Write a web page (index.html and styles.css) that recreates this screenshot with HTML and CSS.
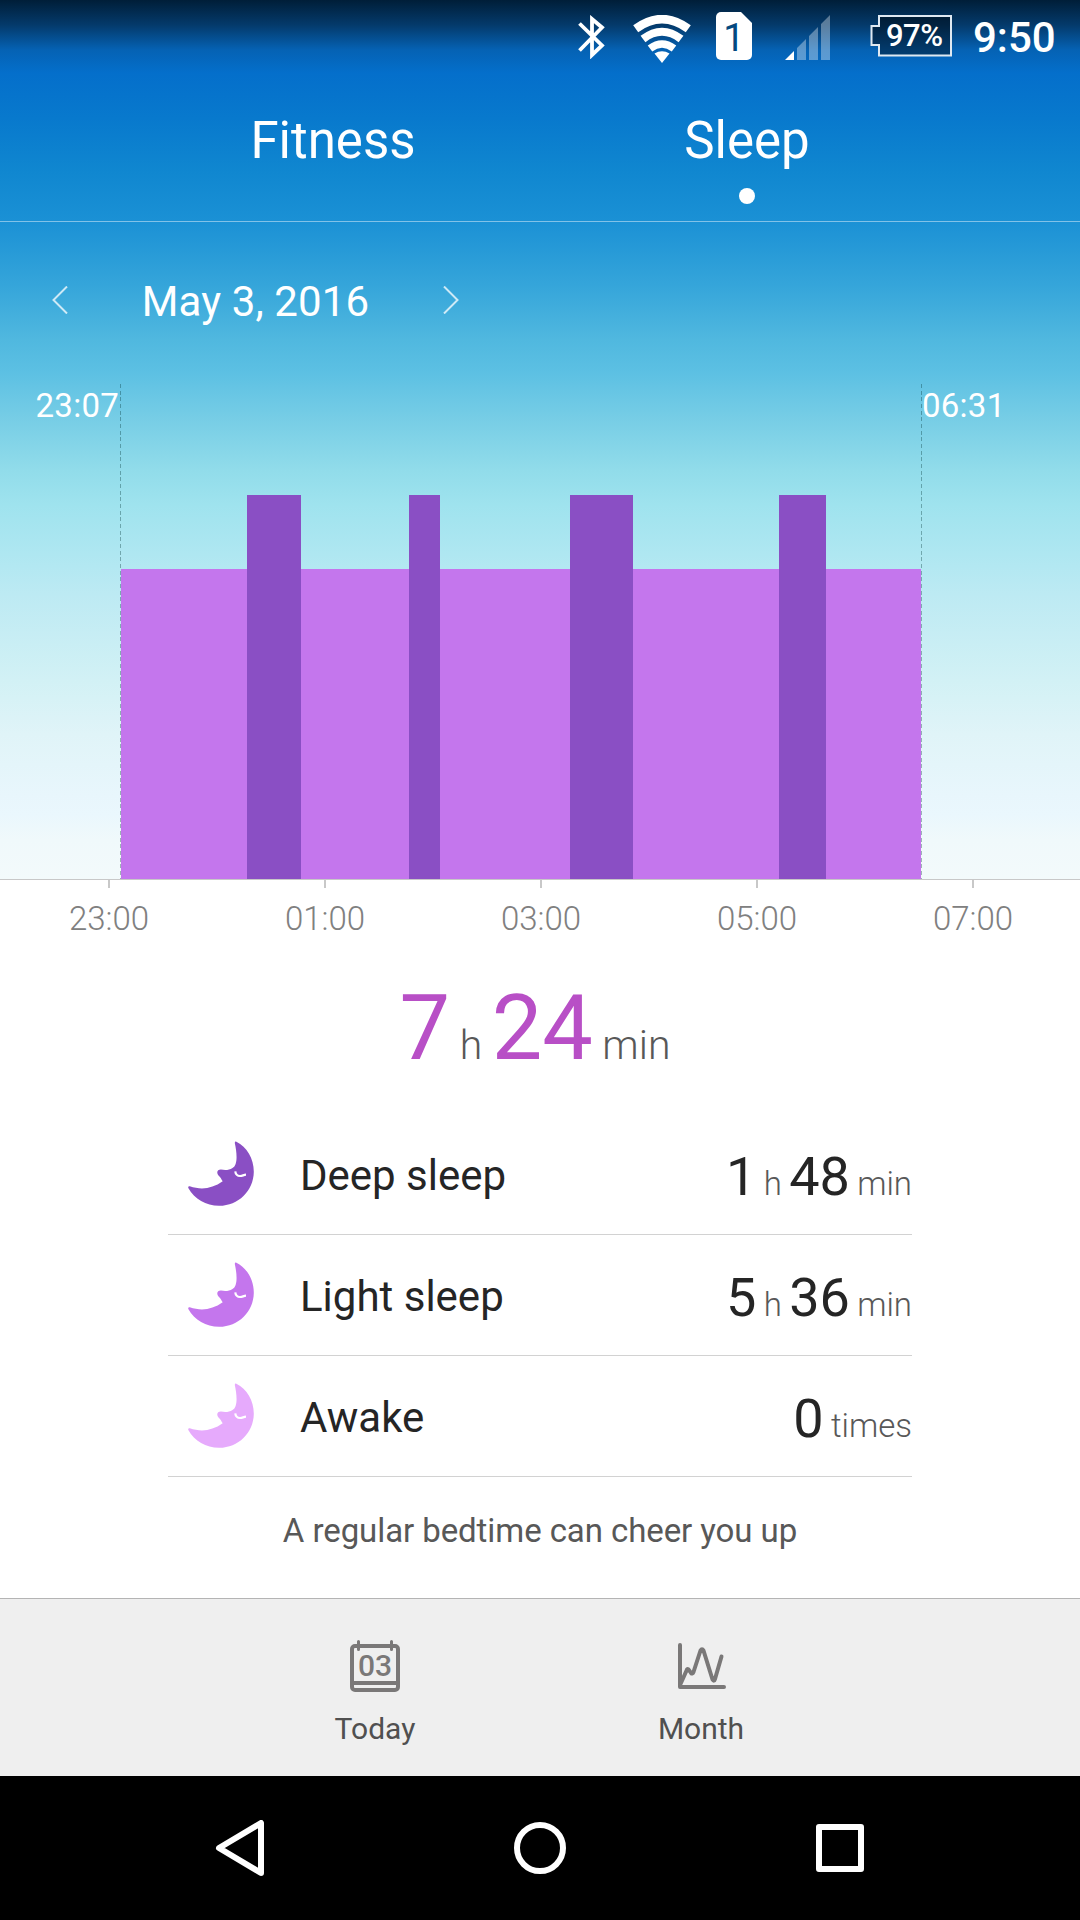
FILE: index.html
```html
<!DOCTYPE html>
<html lang="en">
<head>
    <meta charset="UTF-8">
    <title>Sleep</title>
    <link rel="stylesheet" href="styles.css">
</head>
<body>
    <svg class="symbols">
        <symbol id="moon" viewBox="0 0 66 66">
            <path fill="currentColor" d="M48.4 0.7C59 6 66 18 65.8 31C65.5 50 50 65 31 64.8C18 64.6 6.500 58 0.300 47Q-0.200 45 1.800 45.300C13 49 24 48 34.700 40.300C33 38 33 36.500 30.500 34.500C28 31.500 29.500 28.500 33 28.600C37 29.300 41 29.300 44.500 27C50 24 49 12 46.800 2Q46.800 0.200 48.400 0.700Z"/>
            <path fill="none" stroke="#fff" stroke-width="2.200" d="M47.300 30.300C47.500 33 49.500 35 52 35C54.500 35 55.500 33.800 58 33.700"/>
        </symbol>
    </svg>

    <div class="hero">
        <div class="status-bar">
            <svg class="bluetooth" width="27" height="44" viewBox="0 0 27 44" fill="none" stroke="#fff" stroke-width="3.800">
                <path d="M1.500 8.500L24 30.500L14 40V4L24 12.500L1.500 35.500"/>
            </svg>
            <svg class="wifi" width="58" height="48" viewBox="0 0 58 48" fill="none" stroke="#fff">
                <path fill="#fff" stroke="none" d="M29 48L21.500 38.500Q29 34 36.500 38.500Z"/>
                <path stroke-width="7.500" d="M17 33.500Q29 24.500 41 33.500"/>
                <path stroke-width="8" d="M10 24Q29 9.500 48 24"/>
                <path stroke-width="8.500" d="M2.700 13.700Q29 -5.500 55.300 13.700"/>
            </svg>
            <div class="sim">1</div>
            <svg class="signal" width="45" height="45" viewBox="0 0 45 45" fill="#fff">
                <path d="M0 45L9 36V45Z"/>
                <path opacity=".35" d="M12 45V33L21 24V45ZM24 45V21L33 12V45ZM36 45V9L45 0V45Z"/>
            </svg>
            <div class="battery">
                <svg width="82" height="42" viewBox="0 0 82 42">
                    <path fill="#000" fill-opacity=".4" stroke="#dfe9f2" stroke-width="2" d="M9 1H81V40.500H9V30H1.500V11H9Z"/>
                </svg>
                <span class="battery-text">97%</span>
            </div>
            <span class="clock">9:50</span>
        </div>

        <div class="tabs">
            <div class="tab">Fitness</div>
            <div class="tab active">Sleep</div>
        </div>

        <div class="date-row">
            <svg width="16" height="28" viewBox="0 0 16 28" fill="none" stroke="#fff" stroke-opacity=".75" stroke-width="2"><path d="M15 0.500L1.500 14L15 27.500"/></svg>
            <span class="date">May 3, 2016</span>
            <svg width="16" height="28" viewBox="0 0 16 28" fill="none" stroke="#fff" stroke-opacity=".75" stroke-width="2"><path d="M1 0.500L14.500 14L1 27.500"/></svg>
        </div>

        <div class="chart">
            <span class="start">23:07</span>
            <div class="marker"></div>
            <div class="bars">
                <div class="light" style="width: 126px"></div>
                <div class="deep" style="width: 54px"></div>
                <div class="light" style="width: 108px"></div>
                <div class="deep" style="width: 31px"></div>
                <div class="light" style="width: 130px"></div>
                <div class="deep" style="width: 63px"></div>
                <div class="light" style="width: 146px"></div>
                <div class="deep" style="width: 47px"></div>
                <div class="light" style="width: 95px"></div>
            </div>
            <div class="marker"></div>
            <span class="end">06:31</span>
        </div>
    </div>

    <div class="axis">
        <span>23:00</span>
        <span>01:00</span>
        <span>03:00</span>
        <span>05:00</span>
        <span>07:00</span>
    </div>

    <div class="total"><b>7</b> h <b>24</b> min</div>

    <div class="details">
        <div class="row">
            <svg class="moon deep-moon"><use href="#moon"/></svg>
            <span class="name">Deep sleep</span>
            <span class="value"><b>1</b> h <b>48</b> min</span>
        </div>
        <div class="row">
            <svg class="moon light-moon"><use href="#moon"/></svg>
            <span class="name">Light sleep</span>
            <span class="value"><b>5</b> h <b>36</b> min</span>
        </div>
        <div class="row">
            <svg class="moon awake-moon"><use href="#moon"/></svg>
            <span class="name">Awake</span>
            <span class="value"><b>0</b> times</span>
        </div>
    </div>

    <p class="tip">A regular bedtime can cheer you up</p>

    <div class="bottom-bar">
        <div class="item">
            <svg width="50" height="52" viewBox="0 0 50 52" fill="none" stroke="#7a7878">
                <rect x="2" y="6" width="46" height="44" rx="3" stroke-width="4"/>
                <path stroke-width="4" d="M2 43H48"/>
                <path stroke-width="3" stroke-linecap="round" d="M8.500 1.500V9.500M41.500 1.500V9.500"/>
                <text class="day" x="25" y="35.500" text-anchor="middle">03</text>
            </svg>
            <span>Today</span>
        </div>
        <div class="item">
            <svg width="50" height="52" viewBox="0 0 50 52" fill="none" stroke="#7a7878" stroke-width="4" stroke-linecap="round" stroke-linejoin="round">
                <path d="M4 5V47H48"/>
                <path d="M4.500 44L11 29.500Q12 28.500 13 30L15 33Q16.500 34.500 17.500 32L24.500 10.500Q26 8 27.500 10.500L36.500 39.500Q38 42 39 39L45.500 16.500"/>
            </svg>
            <span>Month</span>
        </div>
    </div>

    <div class="nav-bar">
        <svg width="56" height="56" viewBox="0 0 56 56"><path d="M7 28L49 3V53Z"/></svg>
        <svg width="56" height="56" viewBox="0 0 56 56"><circle cx="28" cy="28" r="23"/></svg>
        <svg width="56" height="56" viewBox="0 0 56 56"><rect x="7" y="7" width="42" height="42"/></svg>
    </div>
</body>
</html>
```
FILE: styles.css
```css
* {
    box-sizing: border-box;
}
body {
    margin: 0;
    width: 1080px;
    height: 1920px;
    overflow: hidden;
    display: flex;
    flex-direction: column;
    font-family: Roboto, "Liberation Sans", sans-serif;
    background-color: #fff;
    color: #252525;
}
svg {
    display: block;
}
b {
    font-weight: 400;
}
.symbols {
    position: absolute;
    width: 0;
    height: 0;
}
.hero {
    height: 879px;
    color: #fff;
    background: linear-gradient(#001e38 0, #043a6b 25px, #0562b4 50px, #046fcb 73px, #0879cd 118px, #1087d0 172px, #1b91d5 222px, #35a5da 285px, #50b8df 340px, #5cc0e3 372px, #7acfe6 425px, #91dcea 470px, #9fe3ee 505px, #b3e8f2 567px, #bdeaf3 595px, #d2f1f5 680px, #e0f4f8 735px, #e8f6fc 795px, #eaf7fd 815px, #f0f9fb 840px, #f3fafb 879px);
}

/* status bar */
.status-bar {
    height: 75px;
    display: flex;
    align-items: flex-start;
    padding-left: 578px;
}
.bluetooth {
    margin-top: 15px;
}
.wifi {
    margin: 15px 0 0 28px;
}
.sim {
    width: 36px;
    height: 48px;
    margin: 12px 0 0 25px;
    border-radius: 5px;
    background-color: #fff;
    clip-path: polygon(0 0, 25px 0, 36px 11px, 36px 48px, 0 48px);
    color: #04497f;
    font-size: 38px;
    line-height: 52px;
    text-align: center;
}
.signal {
    margin: 15px 0 0 33px;
}
.battery {
    position: relative;
    margin: 15px 0 0 40px;
}
.battery-text {
    position: absolute;
    left: 16px;
    top: 0;
    font-size: 31px;
    font-weight: 500;
    line-height: 42px;
    letter-spacing: -0.5px;
}
.clock {
    margin: 13px 0 0 21px;
    font-size: 42px;
    font-weight: 500;
    line-height: 50px;
}

/* tabs */
.tabs {
    height: 147px;
    display: flex;
    padding: 36px 126px 0;
    border-bottom: 1px solid rgba(255, 255, 255, 0.45);
}
.tab {
    width: 414px;
    font-size: 51px;
    line-height: 60px;
    text-align: center;
}
.tab.active::after {
    content: "";
    display: block;
    width: 16px;
    height: 16px;
    margin: 17px auto 0;
    border-radius: 50%;
    background-color: #fff;
}

/* date */
.date-row {
    height: 162px;
    display: flex;
    align-items: flex-start;
    padding: 50px 0 0 52px;
}
.date-row svg {
    margin-top: 14px;
}
.date {
    width: 375px;
    font-size: 42px;
    line-height: 60px;
    letter-spacing: 0.1px;
    text-align: center;
}

/* chart */
.chart {
    height: 495px;
    display: flex;
    font-size: 33px;
    line-height: 40px;
    letter-spacing: 0.25px;
}
.start {
    width: 120px;
    padding: 2px 1px 0 0;
    text-align: right;
}
.end {
    padding-top: 2px;
}
.marker {
    width: 1px;
    background: repeating-linear-gradient(rgba(0, 50, 50, 0.35) 0, rgba(0, 50, 50, 0.35) 4px, transparent 4px, transparent 6.670px);
}
.bars {
    width: 800px;
    display: flex;
    align-items: flex-end;
}
.light {
    height: 310px;
    background-color: #c476ed;
}
.deep {
    height: 384px;
    background-color: #8a4fc4;
}
.axis {
    height: 59px;
    display: flex;
    padding-left: 1px;
    border-top: 1px solid #c8c8c8;
    color: #808080;
    font-size: 33px;
    font-weight: 300;
    line-height: 40px;
}
.axis span {
    flex: 0 0 216px;
    text-align: center;
}
.axis span::before {
    content: "";
    display: block;
    width: 2px;
    height: 8px;
    margin: 0 auto 11px;
    background-color: #c8c8c8;
}

/* totals */
.total {
    height: 100px;
    margin-top: 41px;
    padding-right: 10px;
    text-align: center;
    color: #585858;
    font-size: 41px;
    font-weight: 300;
    line-height: 100px;
    word-spacing: -0.5px;
}
.total b {
    color: #b84fc6;
    font-size: 90px;
}
.details {
    width: 744px;
    margin: 35px 0 0 168px;
}
.row {
    height: 121px;
    display: flex;
    align-items: center;
    border-bottom: 1px solid #d2d2d2;
}
.moon {
    width: 66px;
    height: 66px;
    margin-left: 20px;
}
.deep-moon {
    color: #8a4fc4;
}
.light-moon {
    color: #c476ed;
}
.awake-moon {
    color: #e6aafc;
}
.name {
    margin-left: 46px;
    padding-top: 2px;
    font-size: 42px;
}
.value {
    margin-left: auto;
    padding-top: 4px;
    color: #585858;
    font-size: 33px;
    font-weight: 300;
    word-spacing: -0.7px;
}
.value b {
    color: #252525;
    font-size: 54px;
}
.tip {
    margin: 34px 0 0;
    color: #585858;
    font-size: 33px;
    line-height: 40px;
    letter-spacing: -0.08px;
    text-align: center;
}

/* bottom bars */
.bottom-bar {
    height: 178px;
    margin-top: auto;
    display: flex;
    justify-content: center;
    padding: 41px 4px 0 0;
    border-top: 1px solid #b4b4b4;
    background-color: #efefef;
    color: #505050;
    font-size: 30px;
    line-height: 36px;
}
.item {
    width: 326px;
    display: flex;
    flex-direction: column;
    align-items: center;
    gap: 19px;
}
.day {
    fill: #7a7878;
    stroke: none;
    font-size: 30px;
    font-weight: 500;
}
.nav-bar {
    height: 144px;
    display: flex;
    align-items: center;
    justify-content: center;
    gap: 244px;
    background-color: #000;
}
.nav-bar svg {
    fill: none;
    stroke: #fff;
    stroke-width: 6;
    stroke-linejoin: round;
}
```
